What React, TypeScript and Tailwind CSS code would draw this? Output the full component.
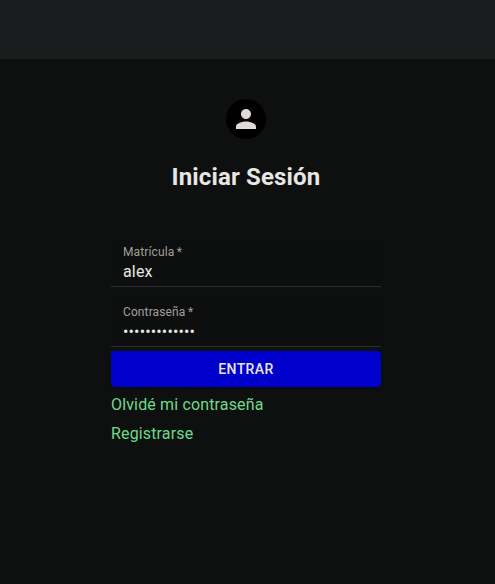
export default function App() {
  return (
    <div className="flex h-[584px] w-[495px] flex-col bg-[#0e100f] font-['Roboto',sans-serif] text-[#e8e6e3]">
      <header className="h-[59px] shrink-0 bg-[#1b1c1e]" />
      <main className="ml-[111px] flex w-[270px] flex-1 flex-col">
        <div className="mt-10 flex size-10 items-center justify-center self-center rounded-full bg-black">
          <svg viewBox="0 0 24 24" className="size-[30px] fill-[#dedbd7]">
            <path d="M12 12c2.21 0 4-1.79 4-4s-1.79-4-4-4-4 1.79-4 4 1.79 4 4 4zm0 2c-2.67 0-8 1.34-8 4v2h16v-2c0-2.66-5.33-4-8-4z" />
          </svg>
        </div>
        <h1 className="mt-[22px] text-center text-2xl leading-8 font-bold tracking-[0.15px]">Iniciar Sesión</h1>
        <form className="mt-[46px] flex flex-col">
          <div className="h-12 rounded-t border-b border-[#2c2e2d] bg-[#0d0f0e] px-3 pt-[7px]">
            <div className="text-xs leading-3 tracking-[0.11px] text-[#a09f9c]">Matrícula&#8201;*</div>
            <div className="mt-0.5 text-base leading-[23px] tracking-[0.15px]">alex</div>
          </div>
          <div className="mt-3 h-12 rounded-t border-b border-[#2c2e2d] bg-[#0d0f0e] px-3 pt-[7px]">
            <div className="text-xs leading-3 tracking-[0.11px] text-[#a09f9c]">Contraseña&#8201;*</div>
            <div className="mt-0.5 text-base leading-[23px] tracking-[0.15px]">•••••••••••••</div>
          </div>
          <button type="button" className="mt-1 h-9 rounded bg-[#0000cc] text-sm font-medium tracking-[0.4px] shadow-[0_2px_3px_rgba(0,0,0,0.3)]">ENTRAR</button>
        </form>
        <a className="mt-1.5 text-base leading-6 tracking-[0.15px] text-[#6ddb8b]">Olvidé mi contraseña</a>
        <a className="mt-[5px] text-base leading-6 tracking-[0.15px] text-[#6ddb8b]">Registrarse</a>
      </main>
    </div>
  );
}
